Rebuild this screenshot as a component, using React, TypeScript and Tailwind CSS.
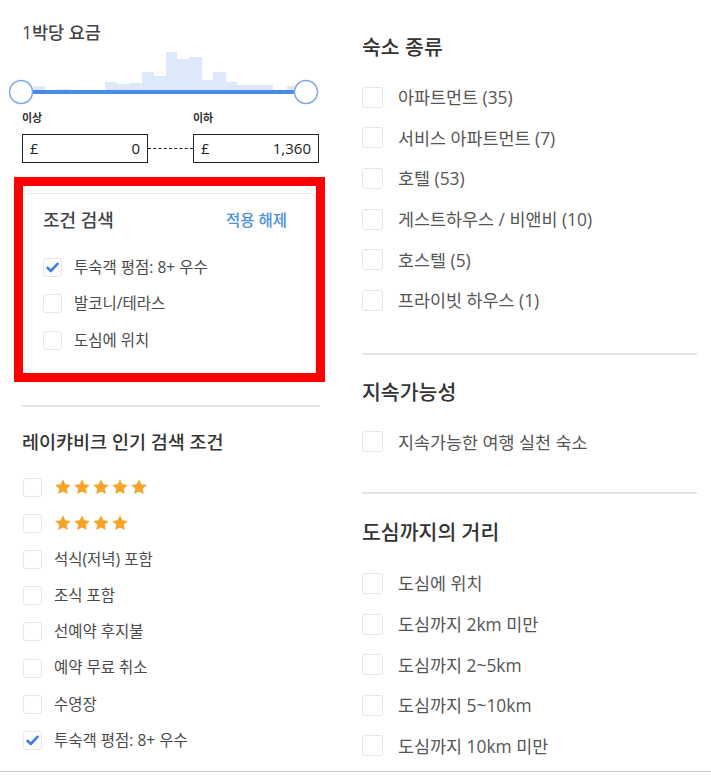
import React from "react";

const font = { fontFamily: '"Open Sans", "Noto Sans CJK KR", sans-serif' };

const bars = [
  [24, 12, 42],
  [48, 13, 45],
  [96, 12, 38],
  [108, 13, 40],
  [121, 12, 39],
  [133, 12, 28],
  [145, 12, 32],
  [157, 11, 8],
  [168, 12, 15],
  [180, 13, 13],
  [193, 11, 36],
  [204, 13, 28],
  [217, 11, 38],
  [228, 36, 41],
  [278, 8, 42],
];

function PriceSlider() {
  return (
    <svg width="310" height="62" viewBox="0 0 310 62" className="-ml-[13px] block">
      {bars.map(([x, w, y]) => (
        <rect key={x} x={x} y={y} width={w} height={48 - y} fill="#dde9fb" />
      ))}
      <rect x="12" y="46" width="285" height="4" fill="#4b8be6" />
      <circle cx="12" cy="48" r="11.5" fill="white" stroke="#7ea8ee" strokeWidth="1.5" />
      <circle cx="297" cy="48" r="11.5" fill="white" stroke="#7ea8ee" strokeWidth="1.5" />
    </svg>
  );
}

function Check({ checked, size = "sm" }: { checked?: boolean; size?: "sm" | "lg" }) {
  return (
    <span
      className={
        size === "lg"
          ? "flex h-[21px] w-[21px] shrink-0 items-center justify-center rounded-[3px] border border-[#e6e6e6] bg-white"
          : "flex h-[19px] w-[19px] shrink-0 items-center justify-center rounded-[3px] border border-[#e6e6e6] bg-white"
      }
    >
      {checked && (
        <svg width="13" height="11" viewBox="0 0 13 11">
          <path d="M1.5 5.8 L4.8 9 L11.5 1.8" fill="none" stroke="#3f7fdf" strokeWidth="2.6" strokeLinecap="round" strokeLinejoin="round" />
        </svg>
      )}
    </span>
  );
}

function Stars({ n }: { n: number }) {
  return (
    <span className="flex gap-[1px]">
      {Array.from({ length: n }).map((_, i) => (
        <svg key={i} width="18" height="18" viewBox="0 0 24 24">
          <path d="M12 1.8l3.1 6.6 7.2.9-5.3 5 1.4 7.1L12 17.9l-6.4 3.5L7 14.3 1.7 9.3l7.2-.9z" fill="#f6a428" />
        </svg>
      ))}
    </span>
  );
}

function LeftRow({ children, checked }: { children: React.ReactNode; checked?: boolean }) {
  return (
    <div className="flex h-[36.2px] items-center gap-[12px] pl-[1px] text-[15.5px] text-[#4a4a4a]">
      <Check checked={checked} />
      {children}
    </div>
  );
}

function RightRow({ children }: { children: React.ReactNode }) {
  return (
    <div className="flex h-[40.6px] items-center gap-[15px] text-[17.4px] text-[#555]">
      <Check size="lg" />
      <span>{children}</span>
    </div>
  );
}

export default function App() {
  return (
    <div className="h-[784px] w-[711px] bg-white" style={font}>
      <div className="flex h-[772px] border-b border-[#c9c9c9] pl-[22px]">
        {/* left column */}
        <div className="w-[298px] pt-[20px]">
          <div className="text-[17.5px] leading-[24px] font-medium text-[#444]">1박당 요금</div>
          <PriceSlider />

          <div className="mt-[4px] flex items-end">
            <div className="w-[126px]">
              <div className="text-[11px] leading-[16px] font-bold text-[#333]">이상</div>
              <div className="mt-[8px] flex h-[29px] items-center justify-between border border-[#222] px-[7px] text-[15px] text-[#222]">
                <span>£</span>
                <span>0</span>
              </div>
            </div>
            <div className="mb-[14px] w-[45px] border-t border-dashed border-[#222]" />
            <div className="w-[126px]">
              <div className="text-[11px] leading-[16px] font-bold text-[#333]">이하</div>
              <div className="mt-[8px] flex h-[29px] items-center justify-between border border-[#222] px-[7px] text-[15px] text-[#222]">
                <span>£</span>
                <span>1,360</span>
              </div>
            </div>
          </div>

          <div className="-ml-[8px] mt-[14px] h-[205px] w-[311px] border-[9px] border-[#ff0000] bg-white pt-[7px]">
            <div className="h-full rounded-t-[6px] border-t border-r border-[#e8e8e8] pl-[20px] pr-[28px] pt-[14px]">
              <div className="flex items-center justify-between leading-[24px]">
                <span className="text-[18px] font-medium text-[#444]">조건 검색</span>
                <span className="text-[15.5px] font-medium text-[#4a8fe3]">적용 해제</span>
              </div>
              <div className="mt-[17px]">
                <div className="flex h-[36.5px] items-center gap-[12px] text-[15.5px] text-[#4a4a4a]">
                  <Check checked />
                  투숙객 평점: 8+ 우수
                </div>
                <div className="flex h-[36.5px] items-center gap-[12px] text-[15.5px] text-[#4a4a4a]">
                  <Check />
                  발코니/테라스
                </div>
                <div className="flex h-[36.5px] items-center gap-[12px] text-[15.5px] text-[#4a4a4a]">
                  <Check />
                  도심에 위치
                </div>
              </div>
            </div>
          </div>

          <div className="mt-[23px] h-[2px] bg-[#e4e4e4]" />
          <div className="mt-[22px] text-[18.5px] leading-[26px] font-medium text-[#333]">레이캬비크 인기 검색 조건</div>
          <div className="mt-[14px]">
            <LeftRow>
              <Stars n={5} />
            </LeftRow>
            <LeftRow>
              <Stars n={4} />
            </LeftRow>
            <LeftRow>석식(저녁) 포함</LeftRow>
            <LeftRow>조식 포함</LeftRow>
            <LeftRow>선예약 후지불</LeftRow>
            <LeftRow>예약 무료 취소</LeftRow>
            <LeftRow>수영장</LeftRow>
            <LeftRow checked>투숙객 평점: 8+ 우수</LeftRow>
          </div>
        </div>

        {/* right column */}
        <div className="ml-[42px] w-[335px] pt-[34px]">
          <div className="text-[20.5px] leading-[26px] font-medium text-[#333]">숙소 종류</div>
          <div className="mt-[17px]">
            <RightRow>아파트먼트 (35)</RightRow>
            <RightRow>서비스 아파트먼트 (7)</RightRow>
            <RightRow>호텔 (53)</RightRow>
            <RightRow>게스트하우스 / 비앤비 (10)</RightRow>
            <RightRow>호스텔 (5)</RightRow>
            <RightRow>프라이빗 하우스 (1)</RightRow>
          </div>

          <div className="mt-[32px] h-[2px] bg-[#e4e4e4]" />
          <div className="mt-[24px] text-[20.5px] leading-[26px] font-medium text-[#333]">지속가능성</div>
          <div className="mt-[17px]">
            <RightRow>지속가능한 여행 실천 숙소</RightRow>
          </div>

          <div className="mt-[30px] h-[2px] bg-[#e4e4e4]" />
          <div className="mt-[25px] text-[20.5px] leading-[26px] font-medium text-[#333]">도심까지의 거리</div>
          <div className="mt-[18px]">
            <RightRow>도심에 위치</RightRow>
            <RightRow>도심까지 2km 미만</RightRow>
            <RightRow>도심까지 2~5km</RightRow>
            <RightRow>도심까지 5~10km</RightRow>
            <RightRow>도심까지 10km 미만</RightRow>
          </div>
        </div>
      </div>
    </div>
  );
}
